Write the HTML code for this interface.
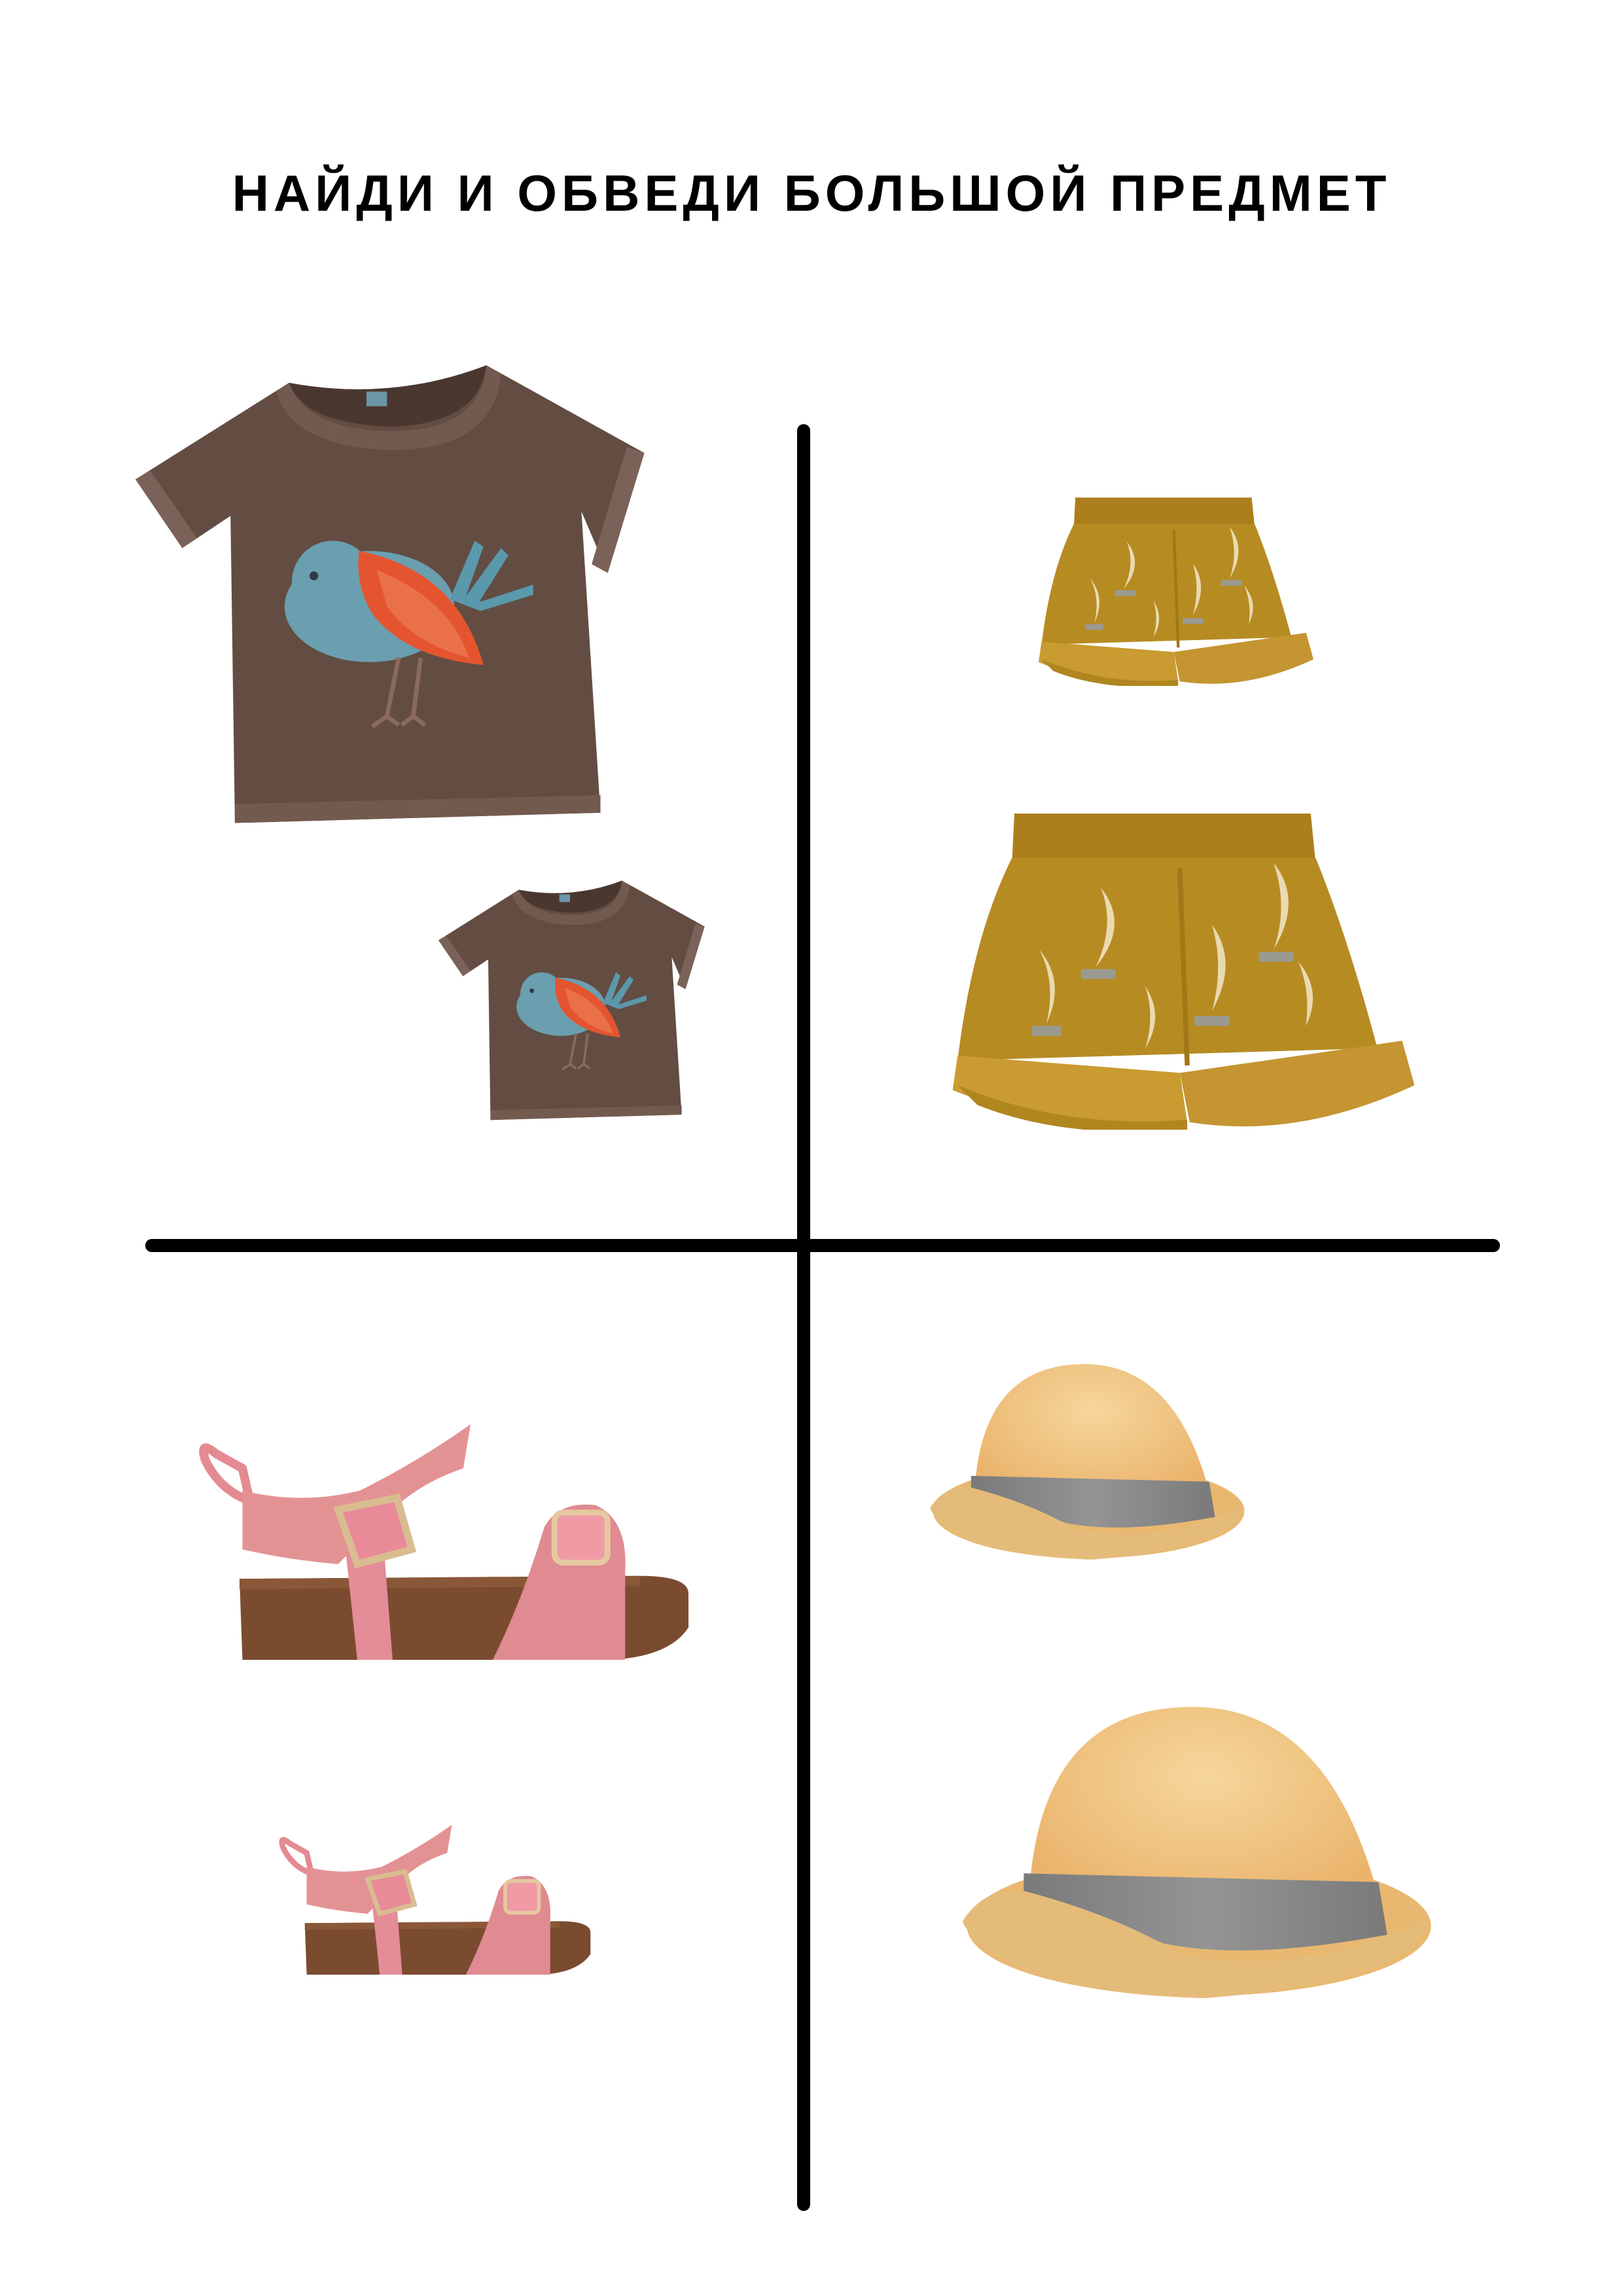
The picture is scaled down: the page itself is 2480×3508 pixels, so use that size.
<!DOCTYPE html>
<html><head><meta charset="utf-8"><style>
html,body{margin:0;padding:0;background:#fff}
body{width:2480px;height:3508px;position:relative;overflow:hidden}
.t{position:absolute;left:0;width:2480px;top:250px;text-align:center;font:bold 78px "Liberation Sans",sans-serif;letter-spacing:7px;color:#000}
svg{position:absolute}
.ln{position:absolute;background:#000;border-radius:10px}
</style></head><body>
<div class="t">НАЙДИ И ОБВЕДИ БОЛЬШОЙ ПРЕДМЕТ</div>
<div class="ln" style="left:1218px;top:648px;width:20px;height:2730px"></div>
<div class="ln" style="left:222px;top:1893px;width:2070px;height:20px"></div>

<svg width="0" height="0" style="position:absolute">
<defs>
<radialGradient id="hg" cx="0.5" cy="0.3" r="0.6"><stop offset="0" stop-color="#f6d69c"/><stop offset="1" stop-color="#eab46c"/></radialGradient>
<linearGradient id="bg" x1="0" x2="1"><stop offset="0" stop-color="#7a7a7a"/><stop offset="0.5" stop-color="#949494"/><stop offset="1" stop-color="#7a7a7a"/></linearGradient>
<symbol id="shirt" viewBox="0 0 350 315">
<path d="M105,12 L0,78 L32,125 L65,103 L68,313 L318,306 L305,100 L323,142 L348,60 L240,0 Q175,25 105,12 Z" fill="#634d42"/>
<path d="M105,12 Q175,25 240,0 Q235,40 175,42 Q115,40 105,12Z" fill="#4a3830"/>
<path d="M105,12 Q118,45 175,45 Q236,45 240,0 L250,6 Q245,58 175,58 Q108,56 96,18Z" fill="#725a4e"/>
<rect x="158" y="18" width="14" height="10" fill="#6a96a8"/>
<path d="M0,78 L32,125 L42,118 L10,72Z" fill="#7a6258"/>
<path d="M348,60 L323,142 L312,136 L336,56Z" fill="#7a6258"/>
<path d="M68,300 L318,294 L318,306 L68,313Z" fill="#735a4f"/>
<ellipse cx="160" cy="165" rx="58" ry="38" fill="#6a9fb0"/>
<circle cx="135" cy="148" r="28" fill="#6a9fb0"/>
<circle cx="122" cy="144" r="3" fill="#2d3d44"/>
<path d="M215,160 L232,120 L238,124 L226,158 L250,125 L255,130 L235,162 L272,150 L272,157 L236,168Z" fill="#5a98ac"/>
<path d="M153,127 Q220,140 238,205 Q185,200 162,170 Q150,150 153,127Z" fill="#e4552f"/>
<path d="M165,140 Q215,160 228,200 Q190,190 172,165Z" fill="#ea7049"/>
<path d="M180,200 L172,240 L162,247 M172,240 L180,246 M195,200 L190,240 L182,246 M190,240 L198,246" stroke="#8a6a5c" stroke-width="3" fill="none"/>
</symbol>
<symbol id="shorts" viewBox="0 0 187 128">
<path d="M25,0 L145,0 L147,20 L24,20Z" fill="#ac7f1c"/>
<path d="M24,18 L147,18 Q160,50 172,95 L2,100 Q8,50 24,18Z" fill="#b68b22"/>
<path d="M92,22 L95,102" stroke="#a27817" stroke-width="2"/>
<g fill="#eadab0">
<path d="M60,30 Q72,45 58,62 Q66,45 60,30Z"/><path d="M130,20 Q142,35 130,55 Q136,38 130,20Z"/>
<path d="M35,55 Q46,68 38,85 Q42,68 35,55Z"/><path d="M105,45 Q116,60 105,80 Q110,62 105,45Z"/>
<path d="M78,70 Q86,82 78,95 Q82,82 78,70Z"/><path d="M140,60 Q150,72 143,86 Q145,72 140,60Z"/>
</g>
<g fill="#9a9a90"><rect x="52" y="63" width="14" height="4"/><rect x="124" y="56" width="14" height="4"/><rect x="98" y="82" width="14" height="4"/><rect x="32" y="86" width="12" height="4"/></g>
<path d="M2,98 L92,105 L95,125 Q45,130 0,112Z" fill="#c99b30"/>
<path d="M92,105 L182,92 L187,110 Q140,132 96,125Z" fill="#c49530"/>
<path d="M2,110 Q45,128 95,124 L95,128 Q45,132 10,118Z" fill="#b0861f"/>
</symbol>
<symbol id="sandal" viewBox="0 0 333 160">
<path d="M28,105 L300,103 Q333,103 333,115 L333,138 Q320,158 280,160 L30,160Z" fill="#7b4b30"/>
<path d="M28,105 L300,103 L300,110 L28,112Z" fill="#8a5838"/>
<path d="M12,20 Q0,10 5,25 Q15,45 35,52 L30,30Z" fill="none" stroke="#e48a92" stroke-width="6"/>
<path d="M30,45 L30,85 Q60,92 95,95 L130,60 Q150,40 180,30 L185,0 Q150,25 110,45 Q70,55 30,45Z" fill="#e39294"/>
<path d="M100,85 L125,70 L132,160 L108,160Z" fill="#e48c98"/>
<path d="M95,58 L135,50 L145,85 L108,95Z" fill="#e88a98" stroke="#d9bc90" stroke-width="5"/>
<path d="M235,70 Q245,52 270,55 Q292,65 290,100 L290,160 L200,160 Q220,120 235,70Z" fill="#e08a92"/>
<rect x="242" y="60" width="36" height="34" rx="6" fill="#f09aa6" stroke="#e6c8a0" stroke-width="4"/>
</symbol>
<symbol id="hat" viewBox="0 0 216 133">
<ellipse cx="108" cy="100" rx="106" ry="32" fill="#e9b870"/>
<path d="M30,100 Q30,0 105,0 Q170,0 192,95 Q110,115 30,100Z" fill="url(#hg)"/>
<path d="M28,76 L190,80 L194,104 Q130,116 92,108 Q55,94 28,90Z" fill="url(#bg)"/>
<path d="M0,98 Q10,82 28,84 Q70,95 100,113 Q150,122 194,104 Q210,100 212,95 Q214,125 110,133 Q15,130 0,98Z" fill="#e5bb7a"/>
</symbol>
</defs></svg>

<svg style="left:207px;top:557px" width="782" height="706" preserveAspectRatio="none"><use href="#shirt" width="782" height="706"/></svg>
<svg style="left:670px;top:1344px" width="409" height="371" preserveAspectRatio="none"><use href="#shirt" width="409" height="371"/></svg>
<svg style="left:1587px;top:760px" width="420" height="288"><use href="#shorts" width="420" height="288"/></svg>
<svg style="left:1454px;top:1243px" width="709" height="483"><use href="#shorts" width="709" height="483"/></svg>
<svg style="left:303px;top:2176px" width="749" height="360"><use href="#sandal" width="749" height="360"/></svg>
<svg style="left:418px;top:2788px" width="492" height="229"><use href="#sandal" width="492" height="229"/></svg>
<svg style="left:1421px;top:2084px" width="485" height="299"><use href="#hat" width="485" height="299"/></svg>
<svg style="left:1468px;top:2608px" width="728" height="445"><use href="#hat" width="728" height="445"/></svg>
</body></html>
